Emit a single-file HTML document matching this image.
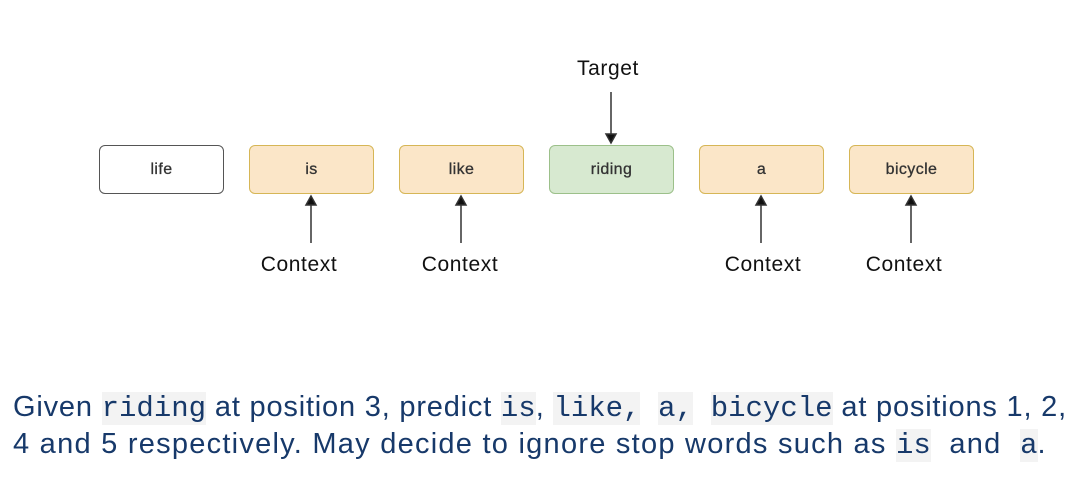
<!DOCTYPE html>
<html><head><meta charset="utf-8"><style>
body{margin:0;width:1088px;height:500px;background:#fff;position:relative;overflow:hidden;font-family:"Liberation Sans",sans-serif}
.b{position:absolute;top:145px;width:123px;height:47px;border:1.5px solid #d6b656;background:#fbe6c8;border-radius:6px;font-size:16px;letter-spacing:0.4px;color:#333;display:flex;align-items:center;justify-content:center;-webkit-text-stroke:0.3px #333}
.l{position:absolute;font-size:21px;letter-spacing:0.6px;color:#111;transform:translateX(-50%)}
.t{position:absolute;left:13px;font-size:29px;color:#17396a;white-space:nowrap;letter-spacing:0.9px}
code{font-family:"Liberation Mono",monospace;font-size:29px;background:#f3f3f3;letter-spacing:0}
</style></head><body>
<div class="b" style="left:99px;border-color:#555;background:#fff">life</div>
<div class="b" style="left:249px">is</div>
<div class="b" style="left:399px">like</div>
<div class="b" style="left:549px;border-color:#9cc08a;background:#d7e9d0">riding</div>
<div class="b" style="left:699px">a</div>
<div class="b" style="left:849px">bicycle</div>
<svg width="1088" height="300" style="position:absolute;left:0;top:0">
<g stroke="#333" stroke-width="1.5" fill="#111">
<line x1="611" y1="92" x2="611" y2="136"/><path d="M606 134 L611 143 L616 134Z"/>
<line x1="311" y1="243" x2="311" y2="203"/><path d="M306 205 L311 196 L316 205Z"/>
<line x1="461" y1="243" x2="461" y2="203"/><path d="M456 205 L461 196 L466 205Z"/>
<line x1="761" y1="243" x2="761" y2="203"/><path d="M756 205 L761 196 L766 205Z"/>
<line x1="911" y1="243" x2="911" y2="203"/><path d="M906 205 L911 196 L916 205Z"/>
</g></svg>
<div class="l" style="left:608px;top:57px">Target</div>
<div class="l" style="left:299px;top:253px">Context</div>
<div class="l" style="left:460px;top:253px">Context</div>
<div class="l" style="left:763px;top:253px">Context</div>
<div class="l" style="left:904px;top:253px">Context</div>
<div class="t" style="top:391px;letter-spacing:0.8px">Given <code>riding</code> at position 3, predict <code>is</code>, <code>like,</code>&nbsp; <code>a,</code>&nbsp; <code>bicycle</code> at positions 1, 2,</div>
<div class="t" style="top:428px;letter-spacing:1.25px">4 and 5 respectively. May decide to ignore stop words such as <code>is</code>&nbsp;&nbsp;and&nbsp;&nbsp;<code>a</code>.</div>
</body></html>
